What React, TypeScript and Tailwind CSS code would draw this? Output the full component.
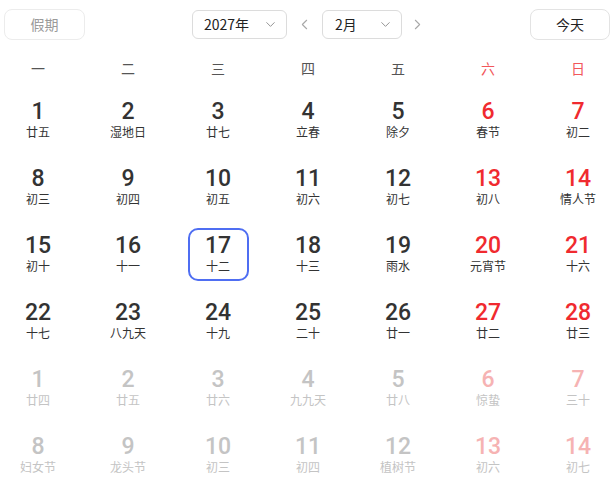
import { ChevronDown, ChevronLeft, ChevronRight } from 'lucide-react';

type Day = { d: number; l: string; faded?: boolean };

const weekdays = ['一', '二', '三', '四', '五', '六', '日'];

const rows: Day[][] = [
  [
    { d: 1, l: '廿五' }, { d: 2, l: '湿地日' }, { d: 3, l: '廿七' }, { d: 4, l: '立春' },
    { d: 5, l: '除夕' }, { d: 6, l: '春节' }, { d: 7, l: '初二' },
  ],
  [
    { d: 8, l: '初三' }, { d: 9, l: '初四' }, { d: 10, l: '初五' }, { d: 11, l: '初六' },
    { d: 12, l: '初七' }, { d: 13, l: '初八' }, { d: 14, l: '情人节' },
  ],
  [
    { d: 15, l: '初十' }, { d: 16, l: '十一' }, { d: 17, l: '十二' }, { d: 18, l: '十三' },
    { d: 19, l: '雨水' }, { d: 20, l: '元宵节' }, { d: 21, l: '十六' },
  ],
  [
    { d: 22, l: '十七' }, { d: 23, l: '八九天' }, { d: 24, l: '十九' }, { d: 25, l: '二十' },
    { d: 26, l: '廿一' }, { d: 27, l: '廿二' }, { d: 28, l: '廿三' },
  ],
  [
    { d: 1, l: '廿四', faded: true }, { d: 2, l: '廿五', faded: true }, { d: 3, l: '廿六', faded: true },
    { d: 4, l: '九九天', faded: true }, { d: 5, l: '廿八', faded: true }, { d: 6, l: '惊蛰', faded: true },
    { d: 7, l: '三十', faded: true },
  ],
  [
    { d: 8, l: '妇女节', faded: true }, { d: 9, l: '龙头节', faded: true }, { d: 10, l: '初三', faded: true },
    { d: 11, l: '初四', faded: true }, { d: 12, l: '植树节', faded: true }, { d: 13, l: '初六', faded: true },
    { d: 14, l: '初七', faded: true },
  ],
];

function DayCell({ day, weekend, selected }: { day: Day; weekend: boolean; selected: boolean }) {
  let numColor = 'text-[#333333]';
  if (weekend) numColor = day.faded ? 'text-[#f6b3b3]' : 'text-[#f02a2f]';
  else if (day.faded) numColor = 'text-[#c4c4c4]';
  const lunarColor = day.faded ? 'text-[#c4c4c4]' : 'text-[#333333]';

  return (
    <div className="flex h-[67px] items-center justify-center pb-[2px]">
      <div
        className={`flex h-[53px] w-[61px] flex-col items-center justify-center rounded-[10px] border-2 pb-[1px] ${
          selected ? 'border-[#4f6ef2]' : 'border-transparent'
        }`}
      >
        <span
          className={`text-[23px] font-medium leading-[22px] ${numColor}`}
          style={{ fontFamily: 'Roboto, "Noto Sans", sans-serif' }}
        >
          {day.d}
        </span>
        <span className={`mt-[1px] text-[12px] leading-[15px] ${lunarColor}`}>{day.l}</span>
      </div>
    </div>
  );
}

export default function App() {
  return (
    <div
      className="h-[486px] w-[610px] overflow-hidden bg-white"
      style={{ fontFamily: '"Noto Sans CJK SC", "Noto Sans", sans-serif' }}
    >
      {/* Header */}
      <div className="flex h-[50px] items-start pl-[4px] pt-[9px]">
        <button className="h-[31px] w-[81px] rounded-[8px] border border-[#ececec] text-[14px] text-[#9a9a9a]">
          假期
        </button>

        <div className="ml-[107px] mt-[1px] flex h-[29px] w-[95px] items-center justify-between rounded-[6px] border border-[#dcdcdc] pl-[11px] pr-[8px]">
          <span className="text-[14px] text-[#222]">2027年</span>
          <ChevronDown className="h-[15px] w-[15px] text-[#8c8c8c]" strokeWidth={1.5} />
        </div>

        <div className="mt-[1px] flex h-[29px] w-[35px] items-center justify-center">
          <ChevronLeft className="h-[17px] w-[17px] text-[#a8a8a8]" strokeWidth={1.5} />
        </div>

        <div className="mt-[1px] flex h-[29px] w-[80px] items-center justify-between rounded-[6px] border border-[#dcdcdc] pl-[12px] pr-[8px]">
          <span className="text-[14px] text-[#222]">2月</span>
          <ChevronDown className="h-[15px] w-[15px] text-[#8c8c8c]" strokeWidth={1.5} />
        </div>

        <div className="mt-[1px] flex h-[29px] w-[30px] items-center justify-center">
          <ChevronRight className="h-[17px] w-[17px] text-[#a8a8a8]" strokeWidth={1.5} />
        </div>

        <button className="ml-auto h-[31px] w-[80px] rounded-[8px] border border-[#e3e3e3] text-[14px] text-[#222]">
          今天
        </button>
      </div>

      {/* Calendar grid */}
      <div className="-ml-[7px] w-[630px]">
        <div className="grid h-[38px] grid-cols-7 items-center pb-[1px]">
          {weekdays.map((w, i) => (
            <div
              key={w}
              className={`text-center text-[14px] ${i >= 5 ? 'text-[#f2575b]' : 'text-[#555]'}`}
            >
              {w}
            </div>
          ))}
        </div>

        {rows.map((row, r) => (
          <div key={r} className="grid grid-cols-7">
            {row.map((day, i) => (
              <DayCell key={i} day={day} weekend={i >= 5} selected={r === 2 && i === 2} />
            ))}
          </div>
        ))}
      </div>
    </div>
  );
}
